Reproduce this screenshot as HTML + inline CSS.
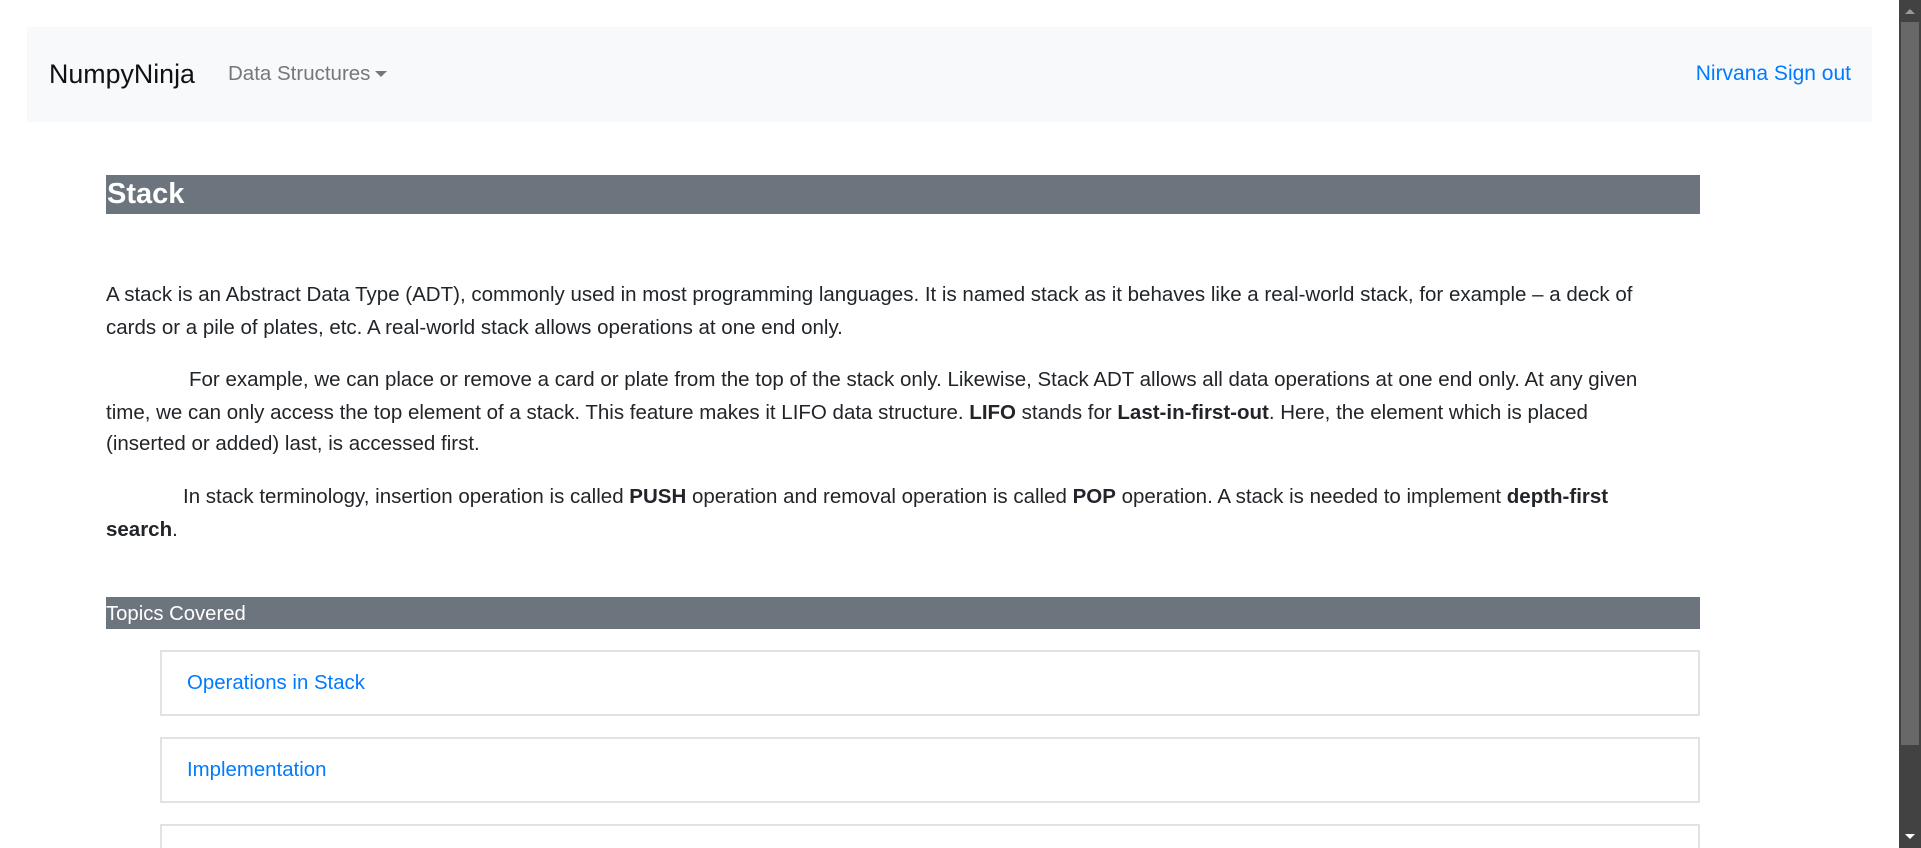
<!DOCTYPE html>
<html><head><meta charset="utf-8"><style>
*{margin:0;padding:0;box-sizing:border-box}
html,body{width:1921px;height:848px;overflow:hidden;background:#fff;font-family:"Liberation Sans",sans-serif;color:#212529}
.a{position:absolute;white-space:nowrap;line-height:1}
.nav{position:absolute;left:27px;top:27px;width:1845px;height:95px;background:#f8f9fa}
.bar{position:absolute;background:#6c757d;color:#fff}
.p{font-size:20.5px}
.card{position:absolute;left:160px;width:1540px;border:2px solid #e2e2e2;background:#fff}
.lk{color:#007bff;font-size:20.4px}
</style></head><body>
<div class="nav"></div>
<div class="a" style="left:49px;top:61px;font-size:26.8px;color:#111">NumpyNinja</div>
<div class="a" style="left:228px;top:64px;font-size:20.5px;color:#777">Data Structures</div>
<div style="position:absolute;left:375px;top:71px;width:0;height:0;border-left:6px solid transparent;border-right:6px solid transparent;border-top:6px solid #777"></div>
<div class="a" style="right:70px;top:63px;font-size:21px;color:#007bff">Nirvana Sign out</div>

<div class="bar" style="left:106px;top:175px;width:1594px;height:39px"></div>
<div class="a" style="left:107px;top:180px;font-size:29px;font-weight:bold;color:#fff">Stack</div>

<div class="a p" style="left:106px;top:285px">A stack is an Abstract Data Type (ADT), commonly used in most programming languages. It is named stack as it behaves like a real-world stack, for example – a deck of</div>
<div class="a p" style="left:106px;top:318px">cards or a pile of plates, etc. A real-world stack allows operations at one end only.</div>

<div class="a p" style="left:189px;top:370px">For example, we can place or remove a card or plate from the top of the stack only. Likewise, Stack ADT allows all data operations at one end only. At any given</div>
<div class="a p" style="left:106px;top:403px">time, we can only access the top element of a stack. This feature makes it LIFO data structure. <b>LIFO</b> stands for <b>Last-in-first-out</b>. Here, the element which is placed</div>
<div class="a p" style="left:106px;top:434px">(inserted or added) last, is accessed first.</div>

<div class="a p" style="left:183px;top:487px">In stack terminology, insertion operation is called <b>PUSH</b> operation and removal operation is called <b>POP</b> operation. A stack is needed to implement <b>depth-first</b></div>
<div class="a p" style="left:106px;top:520px"><b>search</b>.</div>

<div class="bar" style="left:106px;top:597px;width:1594px;height:32px"></div>
<div class="a" style="left:106px;top:604px;font-size:20.3px;color:#fff">Topics Covered</div>

<div class="card" style="top:650px;height:66px"></div>
<div class="a lk" style="left:187px;top:673px">Operations in Stack</div>
<div class="card" style="top:737px;height:66px"></div>
<div class="a lk" style="left:187px;top:760px">Implementation</div>
<div class="card" style="top:824px;height:24px;border-bottom:none"></div>

<div style="position:absolute;left:1899px;top:0;width:22px;height:848px;background:#424242"></div>
<div style="position:absolute;left:1901px;top:22px;width:18px;height:723px;background:#686868"></div>
<div style="position:absolute;left:1905px;top:9px;width:0;height:0;border-left:5px solid transparent;border-right:5px solid transparent;border-bottom:5px solid #9a9a9a"></div>
<div style="position:absolute;left:1905px;top:834px;width:0;height:0;border-left:5px solid transparent;border-right:5px solid transparent;border-top:5px solid #fff"></div>
</body></html>
